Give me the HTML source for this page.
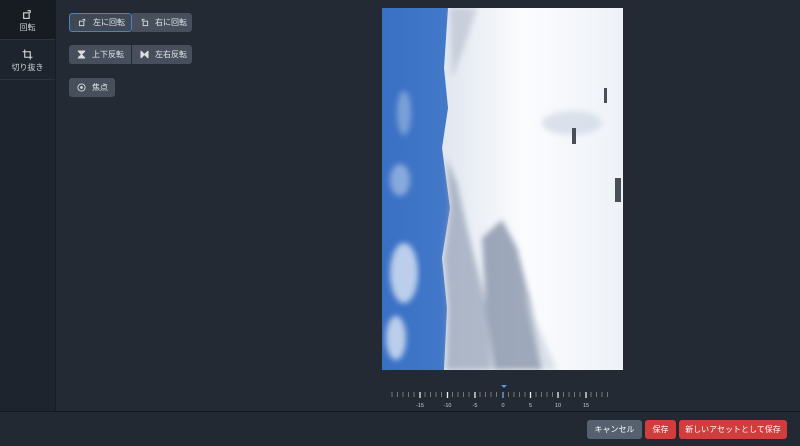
<!DOCTYPE html>
<html><head><meta charset="utf-8"><style>
*{margin:0;padding:0;box-sizing:border-box}
body{width:800px;height:446px;background:#232a34;font-family:"Liberation Sans","Noto Sans CJK JP",sans-serif;color:#dfe3e8;position:relative;overflow:hidden;font-size:8px}
.side{position:absolute;left:0;top:0;width:56px;height:411px;background:#1e242d;border-right:1px solid #181d24}
.si{height:40px;border-bottom:1px solid #2c333d;text-align:center;padding-top:9px;font-size:8px;color:#cfd4da}
.si.act{background:#171c23}
.btn{position:absolute;height:19px;background:#464f5b;border-radius:3px;font-size:8px;color:#e6e9ed;display:flex;align-items:center;padding-left:8px;gap:6px}
.btn.sel{border:1px solid #4a82c4;background:#3f4855}
.foot{position:absolute;left:0;top:411px;width:800px;height:35px;border-top:1px solid #14181e;background:#222933}
.fb{position:absolute;top:8px;height:19px;border-radius:3px;font-size:8px;color:#fff;display:flex;align-items:center;justify-content:center}
</style></head><body>
<div class="side">
 <div class="si act"><svg width="11" height="11" viewBox="0 0 10 10"><rect x="1.5" y="3.5" width="5" height="5" fill="none" stroke="#ddd"/><path d="M5 1.5h2.5v2" fill="none" stroke="#ddd"/></svg><div>回転</div></div>
 <div class="si"><svg width="11" height="11" viewBox="0 0 10 10"><path d="M2.5 0.5v7h7M0.5 2.5h7v7" fill="none" stroke="#ddd"/></svg><div>切り抜き</div></div>
</div>
<div class="btn sel" style="left:69px;top:13px;width:63px"><svg width="9" height="9" viewBox="0 0 10 10"><rect x="1.5" y="3.5" width="5" height="5" fill="none" stroke="#ddd"/><path d="M5 1.5h2.5v2" fill="none" stroke="#ddd"/></svg>左に回転</div>
<div class="btn" style="left:132px;top:13px;width:60px;border-radius:0 3px 3px 0"><svg width="9" height="9" viewBox="0 0 10 10"><rect x="3.5" y="3.5" width="5" height="5" fill="none" stroke="#ddd"/><path d="M5 1.5H2.5v2" fill="none" stroke="#ddd"/></svg>右に回転</div>
<div class="btn" style="left:69px;top:45px;width:62px;border-radius:3px 0 0 3px"><svg width="9" height="9" viewBox="0 0 10 10"><path d="M1 1h8M1 9h8M2 2h6L5 5 2 8h6L5 5z" fill="#ddd" stroke="#ddd"/></svg>上下反転</div>
<div class="btn" style="left:132px;top:45px;width:60px;border-radius:0 3px 3px 0"><svg width="9" height="9" viewBox="0 0 10 10"><path d="M1 1v8M9 1v8M2 2v6L5 5 8 8V2L5 5z" fill="#ddd" stroke="#ddd"/></svg>左右反転</div>
<div class="btn" style="left:69px;top:78px;width:46px"><svg width="9" height="9" viewBox="0 0 10 10"><circle cx="5" cy="5" r="4" fill="none" stroke="#ddd"/><circle cx="5" cy="5" r="1.5" fill="#ddd"/></svg>焦点</div>

<svg style="position:absolute;left:382px;top:8px" width="241" height="362" viewBox="0 0 241 362">
<defs><linearGradient id="sky" x1="0" y1="0" x2="1" y2="0"><stop offset="0" stop-color="#3a70c4"/><stop offset="1" stop-color="#5b8fd4"/></linearGradient>
<linearGradient id="sn" x1="0" y1="0" x2="1" y2="0"><stop offset="0" stop-color="#e0e6f0"/><stop offset=".45" stop-color="#fbfcfe"/><stop offset="1" stop-color="#eef2f8"/></linearGradient>
<filter id="b"><feGaussianBlur stdDeviation="3"/></filter></defs>
<rect width="241" height="362" fill="url(#sky)"/>
<g filter="url(#b)" fill="#e6edf8" opacity=".75">
<ellipse cx="22" cy="265" rx="14" ry="30"/><ellipse cx="18" cy="172" rx="10" ry="16" opacity=".6"/><ellipse cx="22" cy="105" rx="7" ry="22" opacity=".5"/><ellipse cx="14" cy="330" rx="10" ry="22"/></g>
<path d="M66 0H241V362H62L65 300 60 250 68 200 60 140 66 100 62 60z" fill="url(#sn)"/>
<g filter="url(#b)">
<path d="M64 150 75 175 85 220 95 260 105 300 110 362H64L66 300 62 250 68 200z" fill="#9aa6ba" opacity=".75"/>
<path d="M100 230 120 212 135 240 150 300 160 362H112L104 300z" fill="#7f8ca3" opacity=".75"/>
<path d="M68 0 95 0 82 40 70 70z" fill="#b5bdca" opacity=".6"/>
<path d="M140 280 175 362H160z" fill="#c8d0dc" opacity=".6"/>
<ellipse cx="190" cy="115" rx="30" ry="12" fill="#cfd7e5" opacity=".7"/>
</g>
<g fill="#4a4f57"><rect x="190" y="120" width="4" height="16"/><rect x="233" y="170" width="6" height="24"/><rect x="222" y="80" width="3" height="15"/></g>
</svg>

<svg style="position:absolute;left:390px;top:384px" width="230" height="26">
<path d="M111 1h6l-3 3z" fill="#5b9be0"/>
<g stroke="#777" stroke-width="1">
<path d="M2 8v5M7.5 8v5M13 8v5M18.5 8v5M24 8v5M35 8v5M40.5 8v5M46 8v5M51.5 8v5M62.5 8v5M68 8v5M73.5 8v5M79 8v5M90 8v5M95.5 8v5M101 8v5M106.5 8v5M118.5 8v5M124 8v5M129.5 8v5M135 8v5M146 8v5M151.5 8v5M157 8v5M162.5 8v5M173.5 8v5M179 8v5M184.5 8v5M190 8v5M201 8v5M206.5 8v5M212 8v5M217.5 8v5"/></g>
<g stroke="#eee" stroke-width="1.3"><path d="M30 8v6M57.5 8v6M85 8v6M140.5 8v6M168 8v6M196 8v6"/></g>
<path d="M113 8v6" stroke="#5b9be0" stroke-width="1.5"/>
<g fill="#ccc" font-size="5.5" text-anchor="middle" font-family="Liberation Sans"><text x="30" y="23">-15</text><text x="57.5" y="23">-10</text><text x="85" y="23">-5</text><text x="113" y="23">0</text><text x="140.5" y="23">5</text><text x="168" y="23">10</text><text x="196" y="23">15</text></g>
</svg>

<div class="foot">
 <div class="fb" style="left:587px;width:55px;background:#566170">キャンセル</div>
 <div class="fb" style="left:645px;width:31px;background:#d23c3c">保存</div>
 <div class="fb" style="left:679px;width:108px;background:#d23c3c">新しいアセットとして保存</div>
</div>
</body></html>
